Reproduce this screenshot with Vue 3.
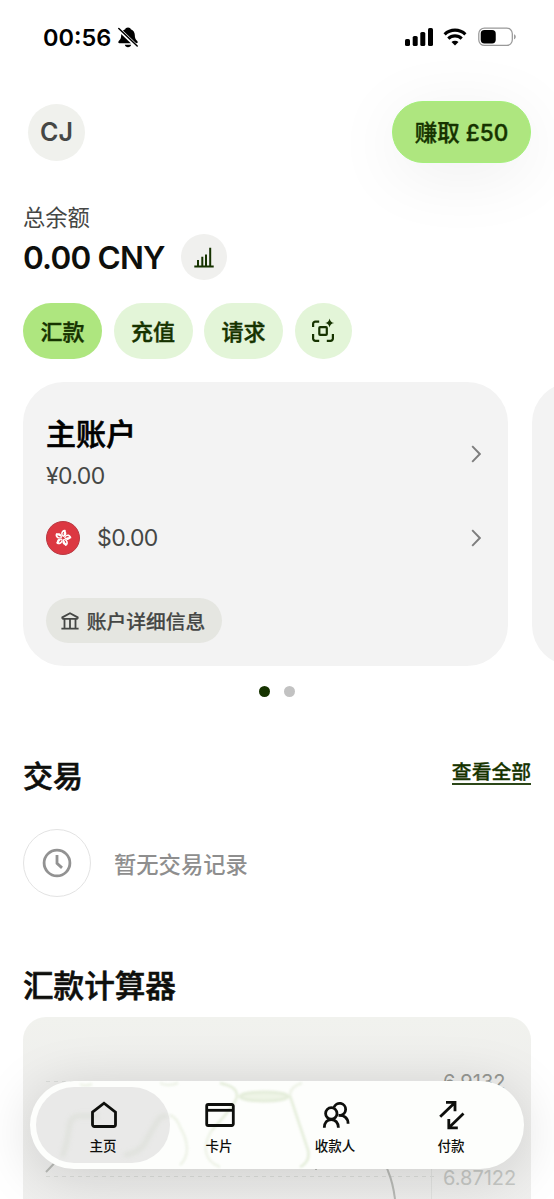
<template>
  <div class="screen">
    <header class="status-bar">
      <div class="status-left">
        <span class="time">{{ time }}</span>
        <svg class="bell" viewBox="0 0 20 21">
          <path d="M10 .4c-1.600 0-2.500.8-2.800 1.800C4.500 3.200 3.300 5.400 3.200 8c-.1 4.200-1.500 4.900-2.600 6.300-.6.800-.3 1.900.8 1.900h17.200c1.100 0 1.400-1.100.8-1.900-1.100-1.400-2.500-2.100-2.600-6.300-.1-2.600-1.300-4.800-4-5.800C12.500 1.200 11.600.4 10 .4zM6.800 17.700c.3 1.400 1.600 2.500 3.200 2.500s2.900-1.100 3.200-2.500z" fill="#000" />
          <path d="M.2 1.500l18.600 18" stroke="#fff" stroke-width="3.700" />
          <path d="M.8 1.500l18.400 17.500" stroke="#000" stroke-width="1.500" stroke-linecap="round" />
        </svg>
      </div>
      <div class="status-right">
        <svg class="signal" viewBox="0 0 28 18">
          <rect x="0" y="11" width="5" height="7" rx="1.600" />
          <rect x="7.700" y="8" width="5" height="10" rx="1.600" />
          <rect x="15.300" y="4" width="5" height="14" rx="1.600" />
          <rect x="23" y="0" width="5" height="18" rx="1.600" />
        </svg>
        <svg class="wifi" viewBox="0 0 24 18">
          <path d="M1.600 6.300a15 15 0 0 1 20.800 0" />
          <path d="M5.300 10.600a9.600 9.600 0 0 1 13.400 0" />
          <path d="M12 17.500l-3.500-3.400a4.900 4.900 0 0 1 7 0z" class="solid" />
        </svg>
        <svg class="battery" viewBox="0 0 40 20">
          <rect x=".8" y=".8" width="34.400" height="17.900" rx="5.800" fill="none" stroke="#999" stroke-width="1.300" />
          <rect x="2.800" y="2.900" width="15.400" height="13.700" rx="3.800" fill="#000" />
          <path d="M37 7.200c2.300.7 2.300 4.500 0 5.200z" fill="#999" />
        </svg>
      </div>
    </header>

    <div class="top-row">
      <div class="avatar">CJ</div>
      <button class="earn-btn">赚取 £50</button>
    </div>

    <section class="balance">
      <div class="balance-label">总余额</div>
      <div class="balance-row">
        <span class="amount">0.00 CNY</span>
        <button class="stats-btn">
          <svg width="20" height="21" viewBox="0 0 20 21" fill="none" stroke="#163300" stroke-width="2">
            <path d="M.3 19.500h19.400M4 19V13M8.300 19V9.800M12 19V7.500M16.200 19V.8" />
          </svg>
        </button>
      </div>
    </section>

    <div class="actions">
      <button
        v-for="(item, i) in actions"
        :key="item"
        class="chip"
        :class="{ primary: i === 0 }"
      >{{ item }}</button>
      <button class="chip scan">
        <svg width="24" height="25" viewBox="0 0 24 25" fill="none" stroke="#163300" stroke-width="2.200">
          <path d="M8.200 3.600H4.400a2.300 2.300 0 0 0-2.300 2.300V9M2.100 16v4.500a2.300 2.300 0 0 0 2.300 2.300h3.800M15.800 22.800h3.800a2.300 2.300 0 0 0 2.300-2.300V16" />
          <rect x="8.300" y="9.200" width="7.500" height="7.700" rx=".8" />
          <path d="M18.600.4c.8 3 1.500 3.700 4.500 4.500-3 .8-3.700 1.500-4.500 4.500-.8-3-1.500-3.700-4.500-4.500 3-.8 3.700-1.500 4.500-4.500z" fill="#163300" stroke="none" />
        </svg>
      </button>
    </div>

    <div class="cards">
      <div class="account-card">
        <div class="account-row main">
          <div>
            <h2 class="account-name">主账户</h2>
            <div class="money">¥0.00</div>
          </div>
          <svg class="chevron" viewBox="0 0 10 18"><path d="M1.200 1.200L8.800 9l-7.600 7.800" /></svg>
        </div>
        <div class="account-row sub">
          <div class="currency">
            <svg class="flag" viewBox="0 0 34 34">
              <circle cx="17" cy="17" r="16.500" fill="#dc3842" stroke="#b93a43" />
              <g v-for="n in 5" :key="n" :transform="`rotate(${n * 72 + 8} 17 17)`">
                <path d="M17 15.900c-2.600-1.200-3.200-3.900-1.900-5.800.9-1.200 2.400-1.700 3.600-1.200-.5 1.200 1.200 1.800 1 3.700-.1 1.500-1.200 2.500-2.700 3.300z" fill="#fff" />
                <path d="M17 14.300c-.8-1.100-.8-2.100-.1-3.200" fill="none" stroke="#dc3842" stroke-width="1" />
              </g>
            </svg>
            <span class="money">$0.00</span>
          </div>
          <svg class="chevron" viewBox="0 0 10 18"><path d="M1.200 1.200L8.800 9l-7.600 7.800" /></svg>
        </div>
        <button class="details-btn">
          <svg width="18" height="18" viewBox="0 0 18 18" fill="none" stroke="#454745" stroke-width="1.800">
            <path d="M.4 16.600h17.200M1.300 6.800h15.400M1.300 6.800V5.400L9 1.200l7.700 4.200v1.400M3.500 7v9.500M9 7v9.500M14.500 7v9.500" />
          </svg>
          <span>账户详细信息</span>
        </button>
      </div>
      <div class="account-card"></div>
    </div>
    <div class="dots">
      <span class="dot active"></span>
      <span class="dot"></span>
    </div>

    <section class="transactions">
      <div class="section-head">
        <h2 class="title">交易</h2>
        <a class="see-all">查看全部</a>
      </div>
      <div class="empty">
        <div class="clock">
          <svg width="30" height="30" viewBox="0 0 30 30" fill="none" stroke="#929292" stroke-width="2.800">
            <circle cx="15" cy="15" r="12.900" />
            <path d="M15 7v8.300l5 4.600" />
          </svg>
        </div>
        <span>暂无交易记录</span>
      </div>
    </section>

    <section class="calculator">
      <h2 class="title">汇款计算器</h2>
      <div class="chart">
        <svg viewBox="0 0 508 182" width="508" height="182" fill="none">
          <path d="M23 64.500h390M23 159.500h390" stroke="#dcdedb" stroke-dasharray="4 4" />
          <path d="M408.500 150v32" stroke="#e2e3e1" />
          <path d="M23 155l20-21M293 153v-20M352 120l13 34q5 12 7 28" stroke="#b9bbb7" stroke-width="2" />
        </svg>
        <span class="tick high">6.9132</span>
        <span class="tick low">6.87122</span>
      </div>
    </section>

    <nav class="tab-bar">
      <!-- chart line refracted through the glass -->
      <svg class="glass" viewBox="0 0 494 88" fill="none">
        <g stroke="#e4edda" stroke-width="2.500">
          <ellipse cx="234" cy="15.500" rx="24" ry="4.500" fill="#eef4e6" stroke-width="3" />
          <path d="M190 2c12 3 17 6 17 13s-16 24-25 34M260 15l18 54c2 9-2 14-8 17" />
          <path d="M272 2c-8 3-12 6-12 13M182 49c-9 14-10 30 8 37M150 46c6 10 12 27 0 38M140 34q7 3 10 12" opacity=".6" />
          <path d="M50 3q5 3 12 0M130 2q8 4 18 0" opacity=".6" />
        </g>
      </svg>
      <div v-for="tab in tabs" :key="tab.key" class="tab" :class="{ active: tab.key === current }" @click="current = tab.key">
        <svg v-if="tab.key === 'home'" class="tab-glass" viewBox="0 0 134 76" fill="none" stroke="#d9ddd5" stroke-width="5">
          <path d="M26 70q4-8 7-28 1-14 10-13h20M88 68q18-2 24-18l10-17q4-6 10-3" />
        </svg>
        <svg class="tab-icon" viewBox="0 0 30 30">
          <path v-for="d in tab.paths" :key="d" :d="d" />
        </svg>
        <span>{{ tab.label }}</span>
      </div>
    </nav>
  </div>
</template>

<script setup>
import { ref } from 'vue'

const time = '00:56'
const actions = ['汇款', '充值', '请求']
const current = ref('home')

const tabs = [
  {
    key: 'home',
    label: '主页',
    paths: ['M3.500 12.200L15 3.200l11.500 9v12.300a2 2 0 0 1-2 2h-19a2 2 0 0 1-2-2z']
  },
  {
    key: 'card',
    label: '卡片',
    paths: ['M3.200 4.500h23.600a1.500 1.500 0 0 1 1.500 1.500v18a1.500 1.500 0 0 1-1.500 1.500H3.200A1.500 1.500 0 0 1 1.700 24V6a1.500 1.500 0 0 1 1.500-1.500z', 'M2 10.300h26']
  },
  {
    key: 'recipients',
    label: '收款人',
    paths: [
      'M10.300 7.700a5.700 5.700 0 1 1 0 11.400a5.700 5.700 0 1 1 0-11.400z',
      'M3.300 27.800c0-5 3-8.300 7-8.300s7.100 3.300 7.100 8.300',
      'M13 7.300a6 6 0 1 1 6.500 8',
      'M17.500 15.500c5.200-.5 9.600 2.300 9.600 8.300'
    ]
  },
  {
    key: 'payments',
    label: '付款',
    paths: ['M3.200 16.800L18 2.400M9 2.400h9v8.800', 'M26.500 13.500L11.800 27.800M11.800 19v8.800h9']
  }
]
</script>

<style>
body {
  margin: 0;
  background: #fff;
}
</style>

<style scoped>
.screen {
  position: relative;
  width: 554px;
  height: 1199px;
  overflow: hidden;
  background: #fff;
  color: #0e0f0c;
  font-family: Inter, "Noto Sans CJK SC", sans-serif;
}

button {
  border: none;
  padding: 0;
  font-family: inherit;
  color: #163300;
  display: flex;
  align-items: center;
  justify-content: center;
}

h2 {
  margin: 0;
}

svg {
  display: block;
  flex-shrink: 0;
}

.status-bar {
  height: 74px;
  padding: 0 37px 0 43px;
  display: flex;
  align-items: center;
  justify-content: space-between;
}

.status-left,
.status-right {
  display: flex;
  align-items: center;
}

.time {
  font-size: 23.5px;
  font-weight: 600;
  color: #000;
}

.bell {
  width: 20px;
  height: 21px;
  margin-left: 7px;
}

.signal {
  width: 28px;
  height: 18px;
}

.wifi {
  width: 24px;
  height: 18px;
  margin: 0 11px 0 10px;
  fill: none;
  stroke: #000;
  stroke-width: 3.1;
}

.wifi .solid {
  fill: #000;
  stroke: none;
}

.battery {
  width: 39px;
  height: 20px;
}

.top-row {
  height: 116px;
  padding: 0 23px 0 28px;
  display: flex;
  align-items: center;
  justify-content: space-between;
}

.avatar {
  width: 57px;
  height: 57px;
  border-radius: 50%;
  background: #f0f1ed;
  color: #454745;
  font-size: 25px;
  font-weight: 600;
  display: flex;
  align-items: center;
  justify-content: center;
}

.earn-btn {
  box-sizing: border-box;
  width: 139px;
  height: 62px;
  padding-bottom: 2px;
  border: 1px solid #a5ef7b;
  border-radius: 31px;
  background: #aee67f;
  font-size: 22.5px;
  font-weight: 500;
  -webkit-text-stroke: 0.4px #163300;
  box-shadow: 0 12px 70px rgba(0, 0, 0, 0.07);
}

.balance {
  height: 113px;
  padding: 12px 23px 0;
  box-sizing: border-box;
}

.balance-label {
  height: 32px;
  line-height: 32px;
  font-size: 22.3px;
  color: #454745;
}

.balance-row {
  height: 46px;
  display: flex;
  align-items: center;
  gap: 18px;
}

.amount {
  width: 140px;
  white-space: nowrap;
  font-size: 31.5px;
  font-weight: 600;
  letter-spacing: -0.8px;
}

.stats-btn {
  width: 46px;
  height: 46px;
  border-radius: 50%;
  background: #f0f0ee;
}

.actions {
  display: flex;
  gap: 11.5px;
  padding: 0 23px;
}

.chip {
  box-sizing: border-box;
  width: 79px;
  height: 56px;
  padding-bottom: 2px;
  border-radius: 28px;
  background: #e3f5d8;
  font-size: 22px;
  font-weight: 500;
  -webkit-text-stroke: 0.4px #163300;
}

.chip.primary {
  background: #aee67f;
}

.chip.scan {
  width: 57px;
}

.cards {
  display: flex;
  gap: 23.5px;
  width: 1100px;
  padding: 23px 0 0 23px;
}

.account-card {
  box-sizing: border-box;
  width: 485px;
  height: 284px;
  padding: 30px 27px 0 23px;
  border-radius: 41px;
  background: #f3f3f3;
}

.account-row {
  display: flex;
  align-items: center;
  justify-content: space-between;
}

.account-row.main {
  height: 83px;
}

.account-name {
  height: 44px;
  line-height: 44px;
  font-size: 30px;
  font-weight: 500;
  color: #000;
  -webkit-text-stroke: 0.6px #000;
}

.money {
  font-size: 23px;
  line-height: 40px;
  letter-spacing: -0.6px;
  color: #454745;
}

.account-row.sub {
  height: 86px;
}

.currency {
  display: flex;
  align-items: center;
  gap: 17px;
}

.flag {
  width: 34px;
  height: 34px;
}

.chevron {
  width: 10px;
  height: 18px;
  fill: none;
  stroke: #7d7d7d;
  stroke-width: 1.9;
}

.details-btn {
  width: 176px;
  height: 45px;
  margin-top: 17px;
  gap: 8px;
  border-radius: 23px;
  background: #e5e6e1;
  color: #454745;
  font-size: 19.8px;
  font-weight: 500;
  -webkit-text-stroke: 0.2px #454745;
}

.details-btn span {
  padding-right: 2px;
}

.dots {
  height: 51px;
  display: flex;
  align-items: center;
  justify-content: center;
  gap: 14px;
}

.dot {
  width: 11px;
  height: 11px;
  border-radius: 50%;
  background: #c2c2c2;
}

.dot.active {
  background: #163300;
}

.section-head {
  height: 112px;
  padding: 39px 23px 0;
  box-sizing: border-box;
  display: flex;
  justify-content: space-between;
}

.title {
  line-height: 40px;
  font-size: 30px;
  font-weight: 500;
  -webkit-text-stroke: 0.6px #0e0f0c;
}

.see-all {
  height: 25px;
  margin-top: 2px;
  line-height: 28px;
  border-bottom: 2px solid #2c4718;
  font-size: 19.8px;
  font-weight: 500;
  color: #163300;
  -webkit-text-stroke: 0.3px #163300;
}

.empty {
  display: flex;
  align-items: center;
  gap: 23px;
  padding: 0 23px;
  font-size: 22.3px;
  font-weight: 500;
  color: #8e8e8e;
}

.clock {
  box-sizing: border-box;
  width: 68px;
  height: 68px;
  border: 1px solid #e3e3e3;
  border-radius: 50%;
  display: flex;
  align-items: center;
  justify-content: center;
}

.calculator {
  padding: 69px 23px 0;
}

.calculator .title {
  height: 51px;
  font-size: 30.6px;
}

.chart {
  position: relative;
  height: 240px;
  border-radius: 23px;
  background: linear-gradient(#f1f2ee, #efefed 60px, #f0f0ef);
}

.tick {
  position: absolute;
  left: 420px;
  font-size: 20px;
  line-height: 24px;
  color: #969893;
}

.tick.high {
  top: 53px;
}

.tick.low {
  top: 149px;
  color: #c6c8c5;
}

.tab-bar {
  position: absolute;
  left: 30px;
  top: 1081px;
  box-sizing: border-box;
  width: 494px;
  height: 88px;
  padding: 0 15px;
  display: flex;
  border-radius: 44px;
  background: #fdfefc;
  box-shadow: 0 8px 56px rgba(0, 0, 0, 0.15);
}

.glass {
  position: absolute;
  inset: 0;
  width: 494px;
  height: 88px;
  filter: blur(1px);
}

.tab {
  position: relative;
  width: 116px;
  display: flex;
  flex-direction: column;
  align-items: center;
  font-size: 13.5px;
  font-weight: 500;
  color: #0e0f0c;
}

.tab.active::before {
  content: '';
  position: absolute;
  left: -9px;
  top: 6px;
  width: 134px;
  height: 76px;
  border-radius: 38px;
  background: #e9e9e8;
}

.tab-glass {
  position: absolute;
  left: -9px;
  top: 6px;
  width: 134px;
  height: 76px;
  opacity: 0.6;
  filter: blur(2px);
}

.tab-icon {
  position: relative;
  left: 0.5px;
  width: 30px;
  height: 30px;
  margin-top: 19px;
  fill: none;
  stroke: #0e0f0c;
  stroke-width: 2.8;
}

.tab span {
  position: relative;
  margin-top: 6px;
  line-height: 20px;
}
</style>
